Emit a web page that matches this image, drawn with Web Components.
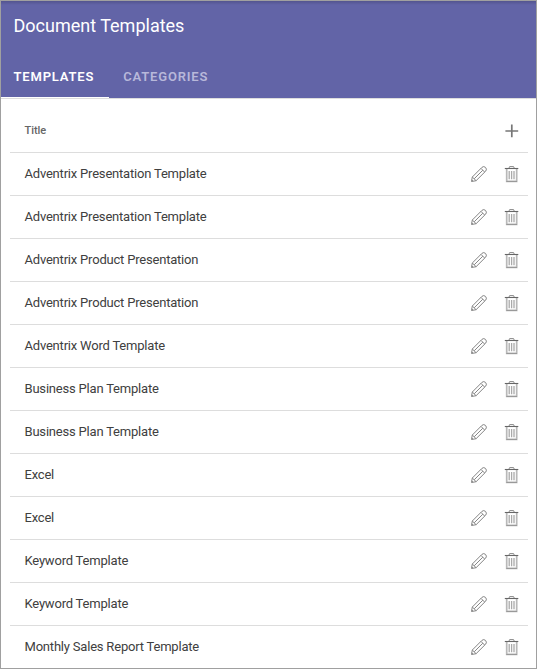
<!DOCTYPE html>
<html lang="en">
<head>
<meta charset="utf-8">
<title>Document Templates</title>
<style>
html, body { margin: 0; height: 100%; }
body { font-family: Roboto, "Liberation Sans", sans-serif; background: #fff; overflow: hidden; }
</style>
</head>
<body>
<template-panel></template-panel>
<script>
const define = (name, html, setup) => customElements.define(name, class extends HTMLElement {
  constructor() {
    super();
    this.attachShadow({ mode: 'open' }).innerHTML = html;
  }
  connectedCallback() { if (setup) setup(this); }
});

const icons = {
  add: '<path d="M7.8 1.5V14.3M1.4 8H14.2" stroke="#777" stroke-width="1.7" fill="none"/>',
  edit: '<g fill="none" stroke="#858585" stroke-width="1" stroke-linejoin="round"><path d="M.5 15.5L1.3 11L11 1.3Q12.7 -.2 14.5 1.4Q16.2 3.2 14.8 5L5.1 14.7Z"/><path d="M10 2.4L13.6 6M1.3 11L5.1 14.7M3.2 12.8L11.8 4.2M.8 14L2 15.1"/></g>',
  trash: '<g fill="none"><path d="M2.7 3V15.3H12.7V3" stroke="#b8b8b8" stroke-width="1.7"/><path d="M2.4 15.5H13" stroke="#999"/><path d="M.8 2.5H14.3" stroke="#666" stroke-width="1.1"/><path d="M5 2L5.6 .6H9.6L10.2 2" stroke="#888"/><path d="M5.2 5V13.2M7.6 5V13.2M10 5V13.2" stroke="#aaa" stroke-width="1.3"/></g>'
};

define('line-icon', '<style>:host{display:block;width:16px;height:16px}svg{display:block;overflow:visible}</style><svg width="16" height="16" viewBox="0 0 16 16"></svg>',
  el => { el.shadowRoot.querySelector('svg').innerHTML = icons[el.getAttribute('name')]; });

define('tab-item', `<style>
:host{display:block;box-sizing:border-box;height:42px;padding:0 14px;border-bottom:1px solid transparent;font-size:13px;font-weight:600;line-height:41px;letter-spacing:.82px;color:#b8b8da}
:host([active]){padding:0 15px 0 12.5px;color:#fff;border-color:#fff}
</style><slot></slot>`);

define('panel-header', `<style>
:host{display:flex;flex-direction:column;justify-content:space-between;box-sizing:border-box;height:98px;background:linear-gradient(#53548f,#6264a7 4px);border-bottom:1px solid #ddd}
.title{padding:13px 12.5px 0;font-size:18px;line-height:24px;color:#fff}
nav{display:flex}
</style><div class="title"><slot name="title"></slot></div><nav><slot></slot></nav>`);

define('list-row', `<style>
:host{display:flex;align-items:center;box-sizing:border-box;height:43px;padding:0 8px 0 14.5px;border-bottom:1px solid #ddd;font-size:13px;letter-spacing:-.2px;color:#404040}
:host([head]){height:54px;padding-top:11px;font-size:11px;font-weight:500;letter-spacing:-.05px;color:#666}
:host(:last-child){border-color:transparent}
.text{flex:1;padding-bottom:2px}
.actions{display:flex;gap:17px}
</style><div class="text"><slot></slot></div><div class="actions"><slot name="actions"></slot></div>`);

const titles = ['Adventrix Presentation Template', 'Adventrix Presentation Template', 'Adventrix Product Presentation', 'Adventrix Product Presentation', 'Adventrix Word Template', 'Business Plan Template', 'Business Plan Template', 'Excel', 'Excel', 'Keyword Template', 'Keyword Template', 'Monthly Sales Report Template'];

define('template-panel', `<style>
:host{display:block;box-sizing:border-box;height:100vh;border:1px solid #a0a0a0;overflow:hidden;background:#fff}
main{padding:0 8px 0 9px}
</style>
<panel-header><span slot="title">Document Templates</span><tab-item active>TEMPLATES</tab-item><tab-item>CATEGORIES</tab-item></panel-header>
<main><list-row head>Title<line-icon slot="actions" name="add"></line-icon></list-row>${titles.map(t => `<list-row>${t}<line-icon slot="actions" name="edit"></line-icon><line-icon slot="actions" name="trash"></line-icon></list-row>`).join('')}</main>`);
</script>
</body>
</html>
